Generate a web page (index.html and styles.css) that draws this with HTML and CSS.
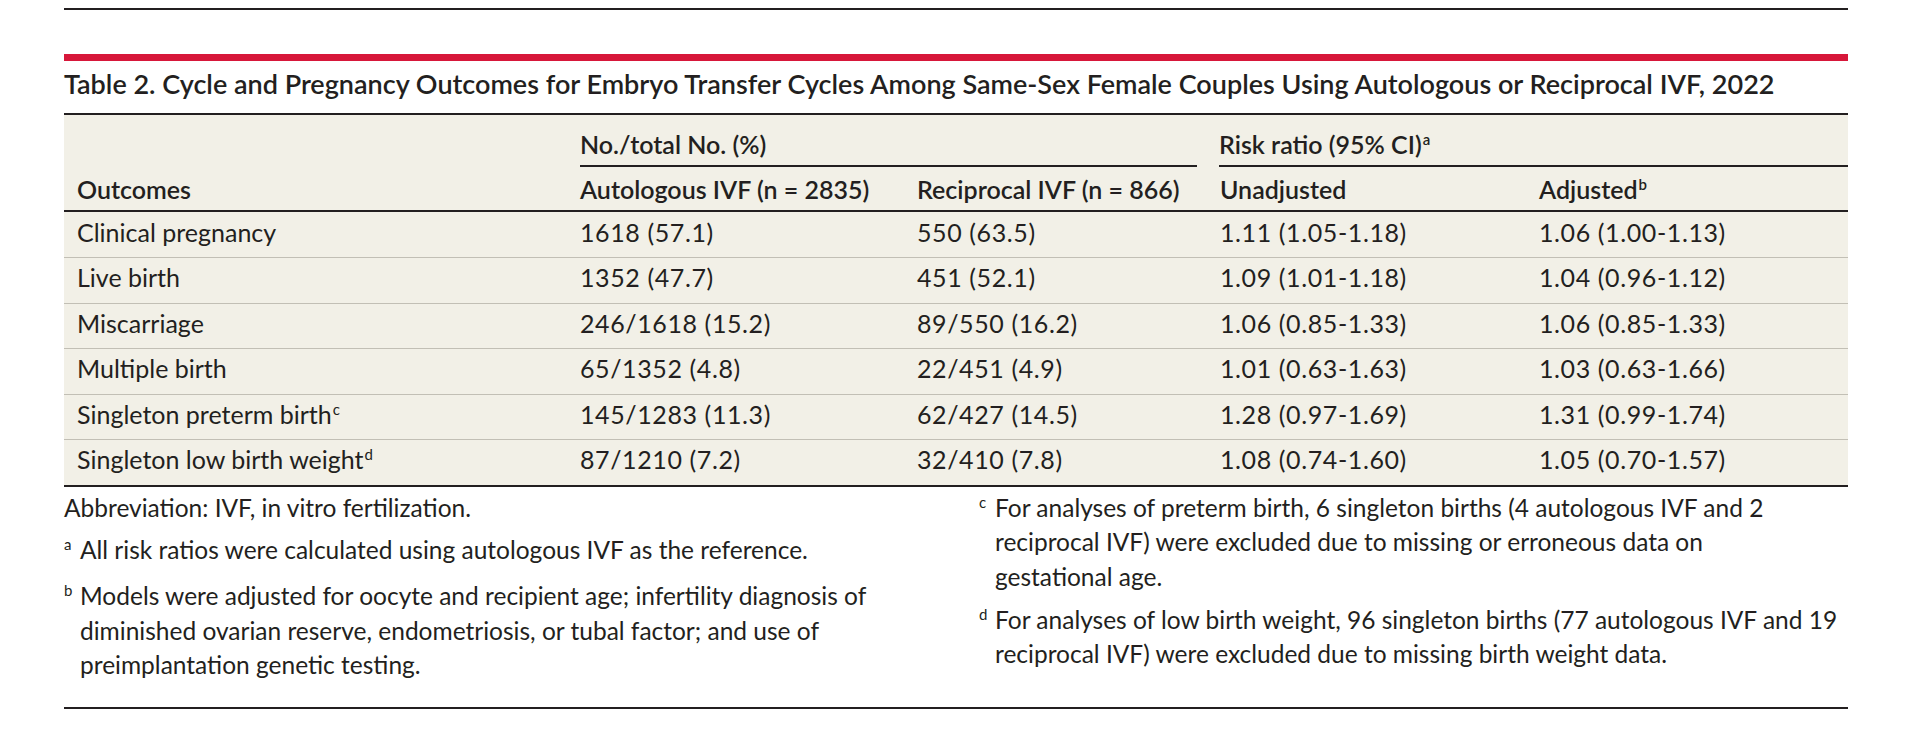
FILE: index.html
```html
<!DOCTYPE html>
<html lang="en">
<head>
<meta charset="utf-8">
<title>Table 2</title>
<link rel="stylesheet" href="styles.css">
</head>
<body>
<div class="page">
  <div class="top-rule"></div>
  <div class="red-bar"></div>
  <h2 class="title">Table 2. Cycle and Pregnancy Outcomes for Embryo Transfer Cycles Among Same-Sex Female Couples Using Autologous or Reciprocal IVF, 2022</h2>
  <table class="data">
    <colgroup>
      <col class="c1"><col class="c2"><col class="c3"><col class="c4"><col class="c5">
    </colgroup>
    <thead>
      <tr class="group-row">
        <th></th>
        <th colspan="2"><div class="group">No./total No. (%)</div></th>
        <th colspan="2"><div class="group group-risk">Risk ratio (95% CI)<sup>a</sup></div></th>
      </tr>
      <tr class="col-row">
        <th>Outcomes</th>
        <th>Autologous IVF (n = 2835)</th>
        <th>Reciprocal IVF (n = 866)</th>
        <th>Unadjusted</th>
        <th>Adjusted<sup>b</sup></th>
      </tr>
    </thead>
    <tbody>
      <tr><td>Clinical pregnancy</td><td class="num">1618 (57.1)</td><td class="num">550 (63.5)</td><td class="num">1.11 (1.05-1.18)</td><td class="num">1.06 (1.00-1.13)</td></tr>
      <tr><td>Live birth</td><td class="num">1352 (47.7)</td><td class="num">451 (52.1)</td><td class="num">1.09 (1.01-1.18)</td><td class="num">1.04 (0.96-1.12)</td></tr>
      <tr><td>Miscarriage</td><td class="num">246/1618 (15.2)</td><td class="num">89/550 (16.2)</td><td class="num">1.06 (0.85-1.33)</td><td class="num">1.06 (0.85-1.33)</td></tr>
      <tr><td>Multiple birth</td><td class="num">65/1352 (4.8)</td><td class="num">22/451 (4.9)</td><td class="num">1.01 (0.63-1.63)</td><td class="num">1.03 (0.63-1.66)</td></tr>
      <tr><td>Singleton preterm birth<sup>c</sup></td><td class="num">145/1283 (11.3)</td><td class="num">62/427 (14.5)</td><td class="num">1.28 (0.97-1.69)</td><td class="num">1.31 (0.99-1.74)</td></tr>
      <tr><td>Singleton low birth weight<sup>d</sup></td><td class="num">87/1210 (7.2)</td><td class="num">32/410 (7.8)</td><td class="num">1.08 (0.74-1.60)</td><td class="num">1.05 (0.70-1.57)</td></tr>
    </tbody>
  </table>
  <div class="notes">
    <div class="notes-col">
      <p class="note">Abbreviation: IVF, in vitro fertilization.</p>
      <p class="note"><span class="mark">a</span><span class="note-text">All risk ratios were calculated using autologous IVF as the reference.</span></p>
      <p class="note"><span class="mark">b</span><span class="note-text">Models were adjusted for oocyte and recipient age; infertility diagnosis of<br>diminished ovarian reserve, endometriosis, or tubal factor; and use of<br>preimplantation genetic testing.</span></p>
    </div>
    <div class="notes-col">
      <p class="note"><span class="mark">c</span><span class="note-text">For analyses of preterm birth, 6 singleton births (4 autologous IVF and 2<br>reciprocal IVF) were excluded due to missing or erroneous data on<br>gestational age.</span></p>
      <p class="note"><span class="mark">d</span><span class="note-text">For analyses of low birth weight, 96 singleton births (77 autologous IVF and 19<br>reciprocal IVF) were excluded due to missing birth weight data.</span></p>
    </div>
  </div>
</div>
</body>
</html>
```
FILE: styles.css
```css
body {
  margin: 0;
  background: #ffffff;
  color: #231f20;
  font-family: Lato, "Open Sans", sans-serif;
}
.page {
  padding: 8px 70px 0 64px;
}
.top-rule {
  border-top: 2px solid #231f20;
}
.red-bar {
  margin-top: 44px;
  height: 7px;
  background: #d7173a;
}
.title {
  margin: 0;
  padding: 5px 0 11px;
  font-size: 27px;
  line-height: 36px;
  font-weight: 600;
  border-bottom: 2px solid #231f20;
}
.data {
  width: 100%;
  table-layout: fixed;
  border-collapse: separate;
  border-spacing: 0;
  background: #f2f0e7;
}
.c1 { width: 503px; }
.c2 { width: 337px; }
.c3 { width: 303px; }
.c4 { width: 319px; }
.c5 { width: 322px; }
th, td {
  padding: 0 0 0 13px;
  text-align: left;
  font-size: 25px;
  line-height: 30px;
  white-space: nowrap;
}
th { font-weight: 600; }
.group-row th {
  padding-top: 14px;
}
.group {
  padding-bottom: 6px;
  margin-right: 10px;
  border-bottom: 2px solid #231f20;
}
.group-risk {
  margin-left: -1px;
  margin-right: 0;
}
.col-row th {
  padding-top: 7px;
  padding-bottom: 5.5px;
  border-bottom: 2px solid #231f20;
}
td {
  padding-top: 4px;
  padding-bottom: 10.5px;
  border-top: 1px solid #c2bfb5;
  font-weight: 400;
}
.num {
  letter-spacing: 0.6px;
}
tbody tr:first-child td {
  border-top-color: transparent;
}
tbody tr:last-child td {
  border-bottom: 2px solid #231f20;
}
sup {
  font-size: 15px;
  line-height: 0;
  vertical-align: 9px;
  margin-left: 1px;
  letter-spacing: 0;
}
.notes {
  display: grid;
  grid-template-columns: 1fr 1fr;
  column-gap: 46px;
  padding: 4px 0 24px;
  border-bottom: 2px solid #231f20;
  font-size: 24.5px;
  line-height: 34.7px;
}
.note {
  margin: 0 0 8px;
  display: flex;
  align-items: baseline;
}
.note:last-child { margin-bottom: 0; }
.note-text {
  white-space: nowrap;
}
.mark {
  flex: none;
  width: 16px;
  font-size: 15px;
  position: relative;
  top: -9px;
}
```
